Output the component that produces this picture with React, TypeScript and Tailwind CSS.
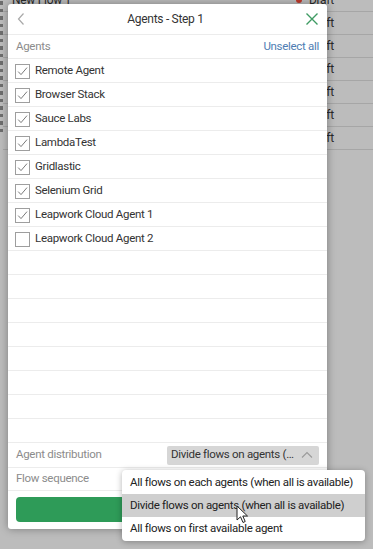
import React from "react";

const agents: { name: string; checked: boolean }[] = [
  { name: "Remote Agent", checked: true },
  { name: "Browser Stack", checked: true },
  { name: "Sauce Labs", checked: true },
  { name: "LambdaTest", checked: true },
  { name: "Gridlastic", checked: true },
  { name: "Selenium Grid", checked: true },
  { name: "Leapwork Cloud Agent 1", checked: true },
  { name: "Leapwork Cloud Agent 2", checked: false },
];

function Checkbox({ checked }: { checked: boolean }) {
  return (
    <div className="w-[15px] h-[15px] border border-[#9e9e9e] bg-white flex items-center justify-center shrink-0">
      {checked && (
        <svg width="13" height="13" viewBox="0 0 13 13">
          <path d="M2.2 6.6 L5 9.6 L11 2.6" fill="none" stroke="#7a7a7a" strokeWidth="1" />
        </svg>
      )}
    </div>
  );
}

export default function App() {
  const bgRows = Array.from({ length: 7 });
  const handles = Array.from({ length: 18 });
  return (
    <div
      className="relative w-[373px] h-[549px] overflow-hidden bg-[#bcbcbc] text-[11.5px] tracking-[-0.3px]"
      style={{ fontFamily: "Roboto, 'Noto Sans', sans-serif" }}
    >
      {/* background page */}
      <div className="flex">
        <div className="flex flex-col gap-[4px] pt-[1px] w-[3px] shrink-0">
          {handles.map((_, i) => (
            <div key={i} className="w-[3px] h-[3.5px] bg-[#6e6e6e]" />
          ))}
        </div>
        <div className="flex flex-col flex-1 -mt-[11px]">
          {bgRows.map((_, i) => (
            <div
              key={i}
              className="h-[23px] flex items-center text-[12px] text-[#2a2a2a] border-b border-[#a6a6a6]"
            >
              <span className="pl-[9px] w-[284px]">{i === 0 ? "New Flow 1" : ""}</span>
              <span className={`w-[6px] h-[6px] rounded-full mr-[7px] ml-[9px] ${i === 0 ? "bg-[#c0392b]" : ""}`} />
              <span>Draft</span>
            </div>
          ))}
        </div>
      </div>

      {/* modal */}
      <div className="absolute left-[8px] top-[4px] w-[319px] h-[525px] bg-white rounded-[3px] shadow-[0_0_8px_rgba(0,0,0,0.35)] flex flex-col">
        <div className="h-[31px] flex items-center justify-between px-[8px] border-b border-[#ececec] shrink-0">
          <svg width="10" height="14" viewBox="0 0 10 14">
            <path d="M7.5 1.5 L2.5 7 L7.5 12.5" fill="none" stroke="#a8a8a8" strokeWidth="1.2" />
          </svg>
          <span className="text-[#333] text-[12px]">Agents - Step 1</span>
          <svg width="14" height="14" viewBox="0 0 14 14">
            <path d="M1.5 1.5 L12.5 12.5 M12.5 1.5 L1.5 12.5" fill="none" stroke="#3f9b63" strokeWidth="1.4" />
          </svg>
        </div>
        <div className="h-[24px] flex items-center justify-between px-[8px] border-b border-[#ececec] shrink-0">
          <span className="text-[#8c8c8c]">Agents</span>
          <span className="text-[#4f7db3]">Unselect all</span>
        </div>
        <div className="flex flex-col shrink-0">
          {agents.map((a) => (
            <div key={a.name} className="h-[24px] flex items-center gap-[5px] px-[7px] pt-[1px] border-b border-[#ececec]">
              <Checkbox checked={a.checked} />
              <span className="text-[#333]">{a.name}</span>
            </div>
          ))}
          {Array.from({ length: 8 }).map((_, i) => (
            <div key={i} className="h-[24px] border-b border-[#ececec]" />
          ))}
        </div>
        <div className="h-[25px] flex items-center justify-between px-[8px] border-b border-[#ececec] shrink-0">
          <span className="text-[#8c8c8c]">Agent distribution</span>
          <div className="w-[152px] h-[19px] bg-[#d6d6d6] rounded-[2px] flex items-center justify-between pl-[4px] pr-[6px]">
            <span className="text-[#333] whitespace-nowrap">Divide flows on agents (…</span>
            <svg width="12" height="8" viewBox="0 0 12 8">
              <path d="M1 6.5 L6 1.5 L11 6.5" fill="none" stroke="#9a9a9a" strokeWidth="1.1" />
            </svg>
          </div>
        </div>
        <div className="h-[23px] flex items-center px-[8px] border-b border-[#ececec] shrink-0">
          <span className="text-[#8c8c8c]">Flow sequence</span>
        </div>
        <div className="px-[8px] pt-[6px]">
          <div className="h-[25px] rounded-[4px] bg-[#2e9b58]" />
        </div>
      </div>

      {/* dropdown menu */}
      <div className="absolute left-[122px] top-[470px] w-[243px] bg-white rounded-[4px] shadow-[0_1px_6px_rgba(0,0,0,0.3)] py-[1px] text-[#222] whitespace-nowrap">
        <div className="h-[23px] flex items-center px-[8px]">All flows on each agents (when all is available)</div>
        <div className="h-[23px] flex items-center px-[8px] bg-[#cfcfcf]">Divide flows on agents (when all is available)</div>
        <div className="h-[23px] flex items-center px-[8px]">All flows on first available agent</div>
      </div>

      {/* mouse cursor */}
      <svg className="absolute left-[236px] top-[505px]" width="13" height="19" viewBox="0 0 13 19">
        <path d="M1 1 L1 15 L4.5 11.8 L7 17.5 L9.2 16.5 L6.8 11 L11.5 11 Z" fill="#fff" stroke="#222" strokeWidth="1" strokeLinejoin="round" />
      </svg>
    </div>
  );
}
